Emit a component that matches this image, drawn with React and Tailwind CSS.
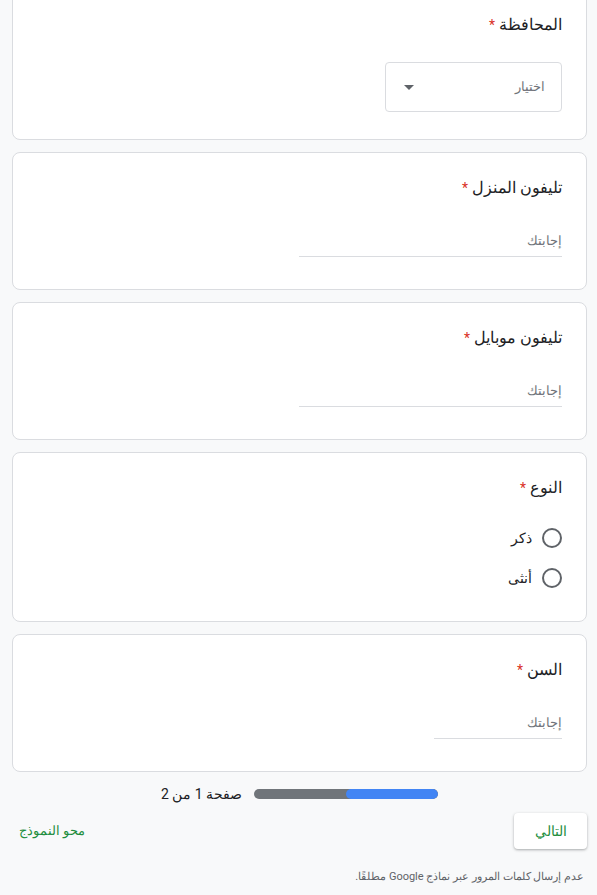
import React from "react";

const font = { fontFamily: "Roboto, Arial, sans-serif" };

const Title = ({ text }) => (
    <div className="h-6 flex items-center text-[16px] text-[#202124] leading-6 font-normal">
        <span>{text}</span>
        <span className="text-[#d93025] mr-1 text-[14px]">*</span>
    </div>
);

const TextQuestion = ({ title, width }) => (
    <div className="bg-white border border-[#dadce0] rounded-lg pt-[23px] pb-[32px] px-6 mb-3">
        <Title text={title} />
        <div className={`mt-[25px] h-8 border-b border-[#dadce0] flex items-center text-[13px] text-[#70757a] ${width}`}>
            إجابتك
        </div>
    </div>
);

const Radio = ({ label }) => (
    <div className="h-10 flex items-center gap-[10px]">
        <div className="w-5 h-5 rounded-full border-2 border-[#5f6368]"></div>
        <span className="text-[14px] text-[#202124]">{label}</span>
    </div>
);

export default function App() {
    return (
        <div dir="rtl" style={font} className="bg-[#f8f9fa] h-[895px] overflow-hidden pr-[10px] pl-3">
            {/* Governorate */}
            <div className="bg-white border border-[#dadce0] rounded-lg pt-[23px] pb-[27px] px-6 mb-3 -mt-[11px]">
                <Title text="المحافظة" />
                <div className="mt-[25px] w-[177px] h-[50px] border border-[#dadce0] rounded flex items-center justify-between pr-4 pl-[18px]">
                    <span className="text-[13px] text-[#70757a]">اختيار</span>
                    <svg width="10" height="5" viewBox="0 0 10 5">
                        <path d="M0 0 L10 0 L5 5 Z" fill="#5f6368" />
                    </svg>
                </div>
            </div>

            <TextQuestion title="تليفون المنزل" width="w-[263px]" />
            <TextQuestion title="تليفون موبايل" width="w-[263px]" />

            {/* Gender */}
            <div className="bg-white border border-[#dadce0] rounded-lg pt-[23px] pb-[23px] px-6 mb-3">
                <Title text="النوع" />
                <div className="mt-[18px]">
                    <Radio label="ذكر" />
                    <Radio label="أنثى" />
                </div>
            </div>

            <TextQuestion title="السن" width="w-[128px]" />

            {/* Progress */}
            <div className="flex items-center justify-center gap-3 h-5">
                <div className="w-[184px] h-[10px] rounded-full bg-[#70757a] overflow-hidden">
                    <div className="h-full w-1/2 bg-[#4285f4] rounded-full"></div>
                </div>
                <span className="text-[14px] text-[#202124]">صفحة 1 من 2</span>
            </div>

            {/* Actions */}
            <div className="flex items-center justify-between mt-[9px]">
                <button className="w-[73px] h-9 bg-white rounded shadow-[0_1px_3px_rgba(60,64,67,0.3),0_1px_2px_rgba(60,64,67,0.15)] text-[14px] text-[#1e8e3e]">
                    التالي
                </button>
                <button className="text-[13px] text-[#1e8e3e] ml-[7px]">محو النموذج</button>
            </div>

            <div className="mt-5 mr-[3px] text-[11px] text-[#5f6368]">
                عدم إرسال كلمات المرور عبر نماذج Google مطلقًا.
            </div>
        </div>
    );
}
